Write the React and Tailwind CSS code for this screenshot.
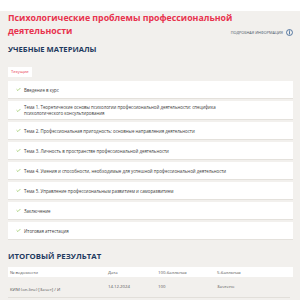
import { Check } from "lucide-react";

const items = [
  "Введение в курс",
  "Тема 1. Теоретические основы психологии профессиональной деятельности: специфика психологического консультирования",
  "Тема 2. Профессиональная пригодность: основные направления деятельности",
  "Тема 3. Личность в пространстве профессиональной деятельности",
  "Тема 4. Умения и способности, необходимые для успешной профессиональной деятельности",
  "Тема 5. Управление профессиональным развитием и саморазвитием",
  "Заключение",
  "Итоговая аттестация",
];

function InfoIcon() {
  return (
    <svg width="7" height="7" viewBox="0 0 16 16" fill="none" stroke="#2f5b8f" strokeWidth="1.8">
      <circle cx="8" cy="8" r="6.8" />
      <line x1="8" y1="7" x2="8" y2="11.5" strokeLinecap="round" />
      <circle cx="8" cy="4.6" r="0.6" fill="#2f5b8f" />
    </svg>
  );
}

export default function App() {
  return (
    <div className="w-[300px] h-[300px] overflow-hidden bg-[#f2f0ed] font-['Open_Sans',sans-serif]">
      <div className="h-[11px] bg-white" />
      <div className="pl-2 pr-[7px]">
        {/* Заголовок */}
        <div className="flex items-end justify-between pt-[1px]">
          <h1 className="w-[214px] shrink-0 whitespace-nowrap text-[8.8px] leading-[13px] font-bold text-[#e8334d]">
            Психологические проблемы профессиональной
            <br />
            деятельности
          </h1>
          <div className="flex shrink-0 items-center gap-[3px] mb-[2px] whitespace-nowrap text-[3.8px] uppercase text-[#4a5668]">
            <span>Подробная информация</span>
            <InfoIcon />
          </div>
        </div>

        <h2 className="mt-[5px] text-[7.6px] leading-[12px] font-bold text-[#1e3a5f]">УЧЕБНЫЕ МАТЕРИАЛЫ</h2>

        <div className="mt-[2px] inline-flex h-[10px] items-center bg-white px-[3px] text-[4.2px] text-[#e8334d]">
          Текущие
        </div>

        {/* Список тем */}
        <div className="mt-[2px] flex flex-col gap-[2px]">
          {items.map((t, i) => (
            <div
              key={i}
              className="flex min-h-[18px] items-center gap-[3px] bg-white pl-[8px] pr-[10px] py-[3px] border-b border-[#e4e1dc]"
            >
              <Check size={5} strokeWidth={3.5} className="shrink-0 text-[#8cc152]" />
              <span className="max-w-[228px] text-[4.4px] leading-[6px] text-[#3a3a3a]">{t}</span>
            </div>
          ))}
        </div>

        <h2 className="mt-[10px] text-[7.8px] leading-[12px] font-bold text-[#1e3a5f]">ИТОГОВЫЙ РЕЗУЛЬТАТ</h2>

        {/* Таблица */}
        <div className="mt-[5px] grid h-[10px] grid-cols-[98px_50px_59px_1fr] items-center bg-white pl-[2px] text-[4.3px] text-[#555]">
          <span>№ ведомости</span>
          <span>Дата</span>
          <span>100-балльная</span>
          <span>5-балльная</span>
        </div>
        <div className="mr-[3px] grid h-[21px] grid-cols-[98px_50px_59px_1fr] border-b border-[#e2dfda] pl-[2px] pt-[6px] text-[4.3px] text-[#555]">
          <span className="pt-[3px]">КИМ (on-line) [Зачет] / И</span>
          <span>14.12.2024</span>
          <span>100</span>
          <span>Зачтено</span>
        </div>
      </div>
    </div>
  );
}
